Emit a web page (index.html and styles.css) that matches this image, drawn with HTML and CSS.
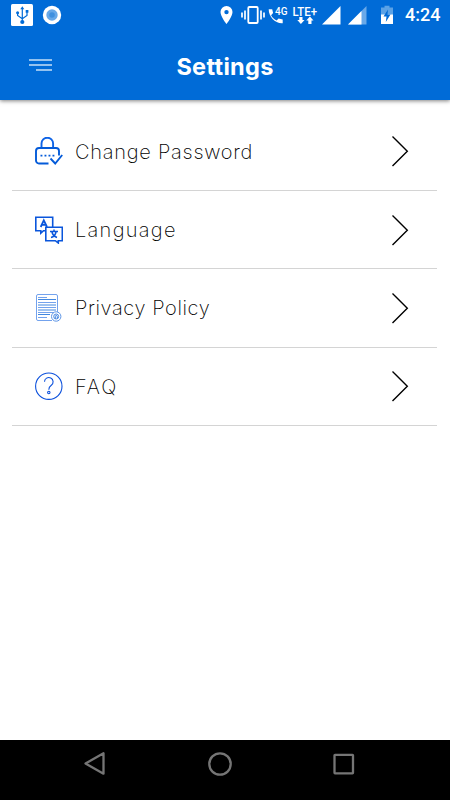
FILE: index.html
```html
<!DOCTYPE html>
<html lang="en">
<head>
    <meta charset="UTF-8">
    <meta name="viewport" content="width=device-width, initial-scale=1.0">
    <title>Settings</title>
    <link rel="stylesheet" href="styles.css">
</head>
<body>
    <header class="header">
        <div class="status-bar">
            <svg class="usb" width="22" height="22" viewBox="0 0 22 22">
                <rect width="22" height="22" rx="1.5" fill="#fff"/>
                <g fill="none" stroke="#006bd7" stroke-width="1.2">
                    <path d="M11.3 4v14M6.6 8.5v3l4.7 3.2 4.7-3.2v-4"/>
                </g>
                <path d="M9.3 5.2l2-3 2 3z" fill="#006bd7"/>
                <circle cx="11.3" cy="18" r="2.1" fill="#006bd7"/>
                <circle cx="6.6" cy="8.8" r="1.5" fill="#006bd7"/>
                <rect x="14.7" y="6" width="2.7" height="2.7" fill="#006bd7"/>
            </svg>
            <svg class="record" width="20" height="20" viewBox="0 0 20 20">
                <circle cx="10" cy="10" r="9.2" fill="#fff"/>
                <circle cx="10" cy="10" r="5.7" fill="#67a8e8"/>
                <circle cx="10" cy="10" r="2.8" fill="#3f90df"/>
            </svg>
            <div class="status-right">
                <svg width="13" height="20" viewBox="0 0 13 20">
                    <path d="M6.5 1A6 6 0 0 0 .5 7c0 4.5 6 12 6 12s6-7.5 6-12a6 6 0 0 0-6-6zm0 3.9a2.2 2.2 0 1 1 0 4.4 2.2 2.2 0 0 1 0-4.4z" fill="#fff"/>
                </svg>
                <svg class="vibrate" width="24" height="20" viewBox="0 0 24 20" fill="none" stroke="#fff">
                    <rect x="7.3" y="2" width="9.4" height="16" rx="1" stroke-width="1.8"/>
                    <path d="M1 7.5v5M4 5.5v9M20 5.5v9M23 7.5v5" stroke-width="1.7"/>
                </svg>
                <svg class="call" width="20" height="20" viewBox="0 0 20 20">
                    <path d="M.7 4.2h3.5l.9 3.9-2 2.1c1.2 2.3 3.1 4.1 5.5 5.3l2-2 4.1 1v3.7c-7.6.5-14-6.5-14-14z" fill="#fff"/>
                    <text x="7" y="9.5" class="tiny" textLength="12.5" lengthAdjust="spacingAndGlyphs">4G</text>
                </svg>
                <svg class="lte" width="26" height="22" viewBox="0 -2 26 22">
                    <text x=".5" y="10.7" class="lte-text" textLength="24.5" lengthAdjust="spacingAndGlyphs">LTE+</text>
                    <path d="M7.3 12h3.2v3h2l-3.6 4-3.6-4h2zM16.3 19h3.2v-3.5h2l-3.6-4-3.6 4h2z" fill="#fff"/>
                </svg>
                <svg class="signal-one" width="19" height="20" viewBox="0 0 19 20">
                    <path d="M0 19.5L18.5 1v18.5z" fill="#fff"/>
                </svg>
                <svg class="signal-two" width="19" height="20" viewBox="0 0 19 20">
                    <path d="M0 19.5L18.5 1v18.5z" fill="#69a9e9"/>
                    <path d="M0 19.5L13.5 6v13.5z" fill="#fff"/>
                </svg>
                <svg class="battery" width="12" height="20" viewBox="0 0 12 20">
                    <path d="M0 2.5h3.5V.8h5v1.7H12V19H0z" fill="#5ba2e6"/>
                    <path d="M0 9.5h12V19H0z" fill="#fff"/>
                    <path d="M7 4.5L2.5 11.5h3L4.8 17l4.7-7.5h-3z" fill="#006bd7"/>
                </svg>
                <span class="time">4:24</span>
            </div>
        </div>
        <div class="title-bar">
            <div class="menu-icon">
                <span></span>
                <span></span>
                <span class="short"></span>
            </div>
            <h1>Settings</h1>
        </div>
    </header>

    <main class="list">
        <div class="item">
            <svg class="icon" width="28" height="28" viewBox="0 0 28 28" fill="none" stroke="#045bd9" stroke-width="1.9">
                <path d="M6.5 11V6.5a5.8 5.8 0 0 1 11.6 0V11" stroke="#0e63e6"/>
                <path d="M13.5 26.5H4A3 3 0 0 1 1 23.5V14A3 3 0 0 1 4 11h17a3 3 0 0 1 3 3v4.5"/>
                <path d="M15.5 21.5l4.7 5 7-8.5"/>
                <path d="M5.5 18.7h14" stroke-width="1.8" stroke-dasharray="1.9 2.1"/>
            </svg>
            <span class="label password">Change Password</span>
            <svg class="arrow" width="18" height="32" viewBox="0 0 18 32"><path d="M1.5 1.5L16.3 16.2 1.5 31"/></svg>
        </div>
        <div class="item">
            <svg class="icon" width="28" height="28" viewBox="0 0 28 28" fill="none" stroke="#0a56dc" stroke-width="1.6">
                <path d="M10.5 14.7H8.5L5.8 17.2V14.7H.8V1.2h16.9v10"/>
                <path d="M5.7 11L8.8 4.3 12 10.8M7 8.8h4" stroke-width="1.8"/>
                <path d="M10.8 11.2h16.5v13.5h-4v2.3l-3-2.3h-9.5z"/>
                <path d="M15 15.5h8M19 13.5v2M21 16c-.5 2.7-2.5 4.8-5 5.5M17 16c.5 2.7 2.5 4.5 5 5.5" stroke-width="1.5"/>
            </svg>
            <span class="label language">Language</span>
            <svg class="arrow" width="18" height="32" viewBox="0 0 18 32"><path d="M1.5 1.5L16.3 16.2 1.5 31"/></svg>
        </div>
        <div class="item">
            <svg class="icon" width="28" height="28" viewBox="0 0 28 28" fill="none" stroke="#73a2ed" stroke-width="1">
                <path d="M17 26.5H3A1.5 1.5 0 0 1 1.5 25V2A1.5 1.5 0 0 1 3 .5h18A1.5 1.5 0 0 1 22.5 2v16"/>
                <path d="M3 3.5h9M3 8.5h18M3 13.5h18M3 18.5h16M3 23.5h9"/>
                <path d="M3 5.5h18M3 11h18M3 16h18M3 20.5h12" stroke="#4388df"/>
                <circle cx="21.2" cy="22.5" r="4.7" fill="#fff" stroke="#5d95e6"/>
                <circle cx="21.2" cy="22.5" r="2.5" stroke="#4b8ae3"/>
                <path d="M20.3 24.8v-2.3a1 1 0 0 1 2 0v1.7" stroke="#3e82df"/>
            </svg>
            <span class="label privacy">Privacy Policy</span>
            <svg class="arrow" width="18" height="32" viewBox="0 0 18 32"><path d="M1.5 1.5L16.3 16.2 1.5 31"/></svg>
        </div>
        <div class="item">
            <svg class="icon" width="28" height="28" viewBox="0 0 28 28" fill="none" stroke="#0b50dc" stroke-width="1.1">
                <circle cx="13.8" cy="14.2" r="13.2"/>
                <path d="M9.5 9.8a4.3 4.3 0 1 1 6.8 3.5c-1.6 1.1-2.5 2-2.5 4.5"/>
                <circle cx="13.8" cy="20.5" r="1.2"/>
            </svg>
            <span class="label faq">FAQ</span>
            <svg class="arrow" width="18" height="32" viewBox="0 0 18 32"><path d="M1.5 1.5L16.3 16.2 1.5 31"/></svg>
        </div>
    </main>

    <nav class="nav-bar">
        <svg width="22" height="24" viewBox="0 0 22 24"><path d="M1.5 11.5L19.5 1.3v20.4z"/></svg>
        <svg width="24" height="24" viewBox="0 0 24 24"><circle cx="12" cy="12" r="10.7"/></svg>
        <svg width="22" height="24" viewBox="0 0 22 24"><rect x="1.5" y="2.8" width="18.5" height="18.5" rx=".5"/></svg>
    </nav>
</body>
</html>
```
FILE: styles.css
```css
* {
    box-sizing: border-box;
}

body {
    margin: 0;
    height: 800px;
    display: flex;
    flex-direction: column;
    background-color: #fff;
    color: #000;
    font-family: Inter, "Open Sans", sans-serif;
    overflow: hidden;
}

svg {
    display: block;
    flex: none;
}

/* Header */
.header {
    height: 100px;
    flex: none;
    background-color: #006bd7;
    color: #fff;
    box-shadow: 0 1px 4px rgba(0, 0, 0, 0.5);
}

.status-bar {
    display: flex;
    align-items: center;
    height: 30px;
    padding: 0 10px 0 11px;
}

.record {
    margin-left: 9px;
}

.status-right {
    display: flex;
    align-items: center;
    margin-left: auto;
}

.vibrate {
    margin-left: 8px;
}

.call {
    margin-left: 3px;
}

.lte {
    margin: -2px 0 0 4px;
    overflow: visible;
}

.signal-one {
    margin-left: 4px;
}

.signal-two {
    margin-left: 7px;
}

.battery {
    margin-left: 14px;
}

.tiny {
    font: 500 10.5px Roboto, sans-serif;
    fill: #fff;
}

.lte-text {
    font: 500 12.5px Roboto, sans-serif;
    fill: #fff;
}

.time {
    width: 35px;
    margin-left: 12px;
    font: 500 18px/30px Roboto, sans-serif;
    white-space: nowrap;
}

.title-bar {
    display: grid;
    grid-template-columns: 148px 1fr 148px;
    align-items: center;
    height: 70px;
}

.menu-icon {
    display: flex;
    flex-direction: column;
    align-items: flex-end;
    gap: 3px;
    width: 23px;
    margin-left: 29px;
}

.menu-icon span {
    width: 23px;
    height: 2px;
    background-color: #94c2ef;
}

.menu-icon .short {
    width: 16px;
}

h1 {
    margin: 3px 0 0;
    font-size: 23.5px;
    line-height: 30px;
    font-weight: 700;
    letter-spacing: 0.3px;
    text-align: center;
    white-space: nowrap;
}

/* Settings list */
.list {
    flex: 1;
    padding: 12.5px 13px 0 12px;
}

.item {
    display: flex;
    align-items: center;
    height: 78.4px;
    padding: 0 28px 0 23px;
    border-bottom: 1px solid #d4d4d4;
}

.label {
    flex: 1;
    margin: 1px 0 0 12px;
    font-size: 20px;
    line-height: 28px;
    font-weight: 200;
    white-space: nowrap;
}

.password {
    letter-spacing: 0.75px;
}

.language {
    letter-spacing: 1.3px;
}

.privacy {
    letter-spacing: 0.6px;
}

.faq {
    letter-spacing: 1.8px;
}

.arrow {
    fill: none;
    stroke: #000;
    stroke-width: 1.4;
}

/* Android navigation */
.nav-bar {
    display: flex;
    justify-content: space-between;
    height: 60px;
    flex: none;
    padding: 12px 95px 0 84px;
    background-color: #000;
}

.nav-bar svg {
    fill: none;
    stroke: #757575;
    stroke-width: 2.3;
    stroke-linejoin: round;
}
```
